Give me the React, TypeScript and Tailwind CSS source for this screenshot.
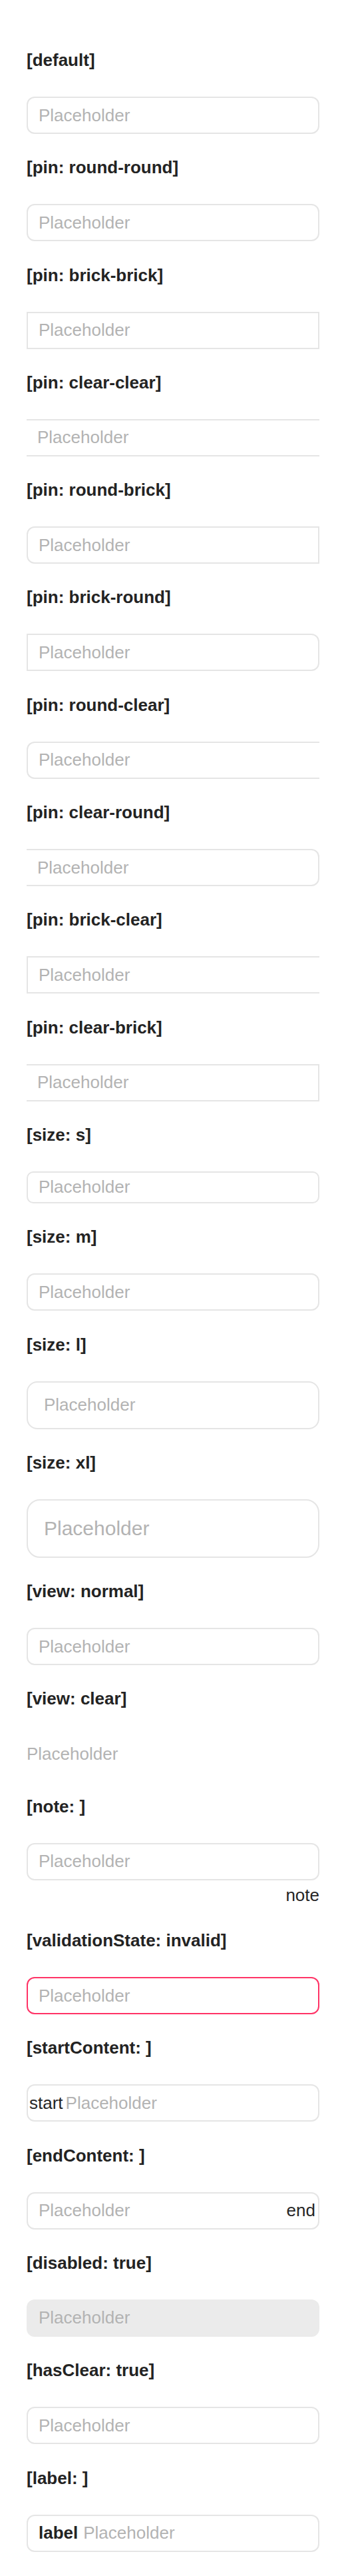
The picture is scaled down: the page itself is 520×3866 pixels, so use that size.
import React from 'react';

type Pin =
  | 'round-round'
  | 'brick-brick'
  | 'clear-clear'
  | 'round-brick'
  | 'brick-round'
  | 'round-clear'
  | 'clear-round'
  | 'brick-clear'
  | 'clear-brick';

const pinClass: Record<Pin, string> = {
  'round-round': 'rounded-[12px] border-2',
  'brick-brick': 'rounded-none border-2',
  'clear-clear': 'rounded-none border-y-2',
  'round-brick': 'rounded-l-[12px] border-2',
  'brick-round': 'rounded-r-[12px] border-2',
  'round-clear': 'rounded-l-[12px] border-y-2 border-l-2',
  'clear-round': 'rounded-r-[12px] border-y-2 border-r-2',
  'brick-clear': 'border-y-2 border-l-2',
  'clear-brick': 'border-y-2 border-r-2',
};

const sizeClass = {
  s: 'h-[48px] rounded-[10px] border-2',
  m: 'h-[56px] rounded-[12px] border-2',
  l: 'h-[72px] rounded-[16px] border-2',
  xl: 'h-[88px] rounded-[20px] border-2',
};

const controlClass =
  'h-full w-full min-w-0 bg-transparent text-[26px] text-[#262626] outline-none placeholder:text-[#b3b3b3]';

const Title = ({ children }: { children: React.ReactNode }) => (
  <div className="text-[26px] font-bold leading-[30px] text-[#232323]">{children}</div>
);

const Section = ({ title, children }: { title: string; children: React.ReactNode }) => (
  <section className="flex flex-col gap-10">
    <Title>{title}</Title>
    {children}
  </section>
);

const PinInput = ({ pin }: { pin: Pin }) => (
  <div className={`flex h-[56px] items-center border-[#e5e5e5] bg-white ${pinClass[pin]}`}>
    <input className={`px-4 ${controlClass}`} placeholder="Placeholder" />
  </div>
);

const pins: Pin[] = [
  'round-round',
  'brick-brick',
  'clear-clear',
  'round-brick',
  'brick-round',
  'round-clear',
  'clear-round',
  'brick-clear',
  'clear-brick',
];

export default function App() {
  return (
    <div className="flex min-h-[3866px] flex-col gap-[35.3px] bg-white px-10 pb-[37px] pt-[75px] font-['Liberation_Sans',Arial,sans-serif]">
      <Section title="[default]">
        <div className={`flex items-center border-[#e5e5e5] ${sizeClass.m}`}>
          <input className={`px-4 ${controlClass}`} placeholder="Placeholder" />
        </div>
      </Section>

      {pins.map((pin) => (
        <Section key={pin} title={`[pin: ${pin}]`}>
          <PinInput pin={pin} />
        </Section>
      ))}

      <Section title="[size: s]">
        <div className={`flex items-center border-[#e5e5e5] ${sizeClass.s}`}>
          <input className={`px-4 ${controlClass}`} placeholder="Placeholder" />
        </div>
      </Section>

      <Section title="[size: m]">
        <div className={`flex items-center border-[#e5e5e5] ${sizeClass.m}`}>
          <input className={`px-4 ${controlClass}`} placeholder="Placeholder" />
        </div>
      </Section>

      <Section title="[size: l]">
        <div className={`flex items-center border-[#e5e5e5] ${sizeClass.l}`}>
          <input className={`px-6 ${controlClass}`} placeholder="Placeholder" />
        </div>
      </Section>

      <Section title="[size: xl]">
        <div className={`flex items-center border-[#e5e5e5] ${sizeClass.xl}`}>
          <input className={`px-6 ${controlClass} text-[30px]`} placeholder="Placeholder" />
        </div>
      </Section>

      <Section title="[view: normal]">
        <div className={`flex items-center border-[#e5e5e5] ${sizeClass.m}`}>
          <input className={`px-4 ${controlClass}`} placeholder="Placeholder" />
        </div>
      </Section>

      <Section title="[view: clear]">
        <div className="flex h-[56px] items-center">
          <input className={`px-0 ${controlClass}`} placeholder="Placeholder" />
        </div>
      </Section>

      <Section title="[note: ]">
        <div className="flex flex-col">
          <div className={`flex items-center border-[#e5e5e5] ${sizeClass.m}`}>
            <input className={`px-4 ${controlClass}`} placeholder="Placeholder" />
          </div>
          <div className="mt-1 text-right text-[26px] leading-[36px] text-[#262626]">note</div>
        </div>
      </Section>

      <Section title="[validationState: invalid]">
        <div className={`flex items-center border-[#ff3366] ${sizeClass.m}`}>
          <input className={`px-4 ${controlClass}`} placeholder="Placeholder" />
        </div>
      </Section>

      <Section title="[startContent: ]">
        <div className={`flex items-center border-[#e5e5e5] ${sizeClass.m}`}>
          <span className="shrink-0 pl-[2px] text-[26px] text-[#262626]">start</span>
          <input className={`pl-1 pr-4 ${controlClass}`} placeholder="Placeholder" />
        </div>
      </Section>

      <Section title="[endContent: ]">
        <div className={`flex items-center border-[#e5e5e5] ${sizeClass.m}`}>
          <input className={`pl-4 pr-1 ${controlClass}`} placeholder="Placeholder" />
          <span className="shrink-0 pr-1 text-[26px] text-[#262626]">end</span>
        </div>
      </Section>

      <Section title="[disabled: true]">
        <div className={`flex items-center border-transparent bg-[#ebebeb] ${sizeClass.m}`}>
          <input disabled className={`px-4 ${controlClass}`} placeholder="Placeholder" />
        </div>
      </Section>

      <Section title="[hasClear: true]">
        <div className={`flex items-center border-[#e5e5e5] ${sizeClass.m}`}>
          <input className={`px-4 ${controlClass}`} placeholder="Placeholder" />
        </div>
      </Section>

      <Section title="[label: ]">
        <label className={`flex items-center border-[#e5e5e5] ${sizeClass.m}`}>
          <span className="shrink-0 pl-4 text-[26px] font-bold text-[#232323]">label</span>
          <input className={`pl-2 pr-4 ${controlClass}`} placeholder="Placeholder" />
        </label>
      </Section>
    </div>
  );
}
